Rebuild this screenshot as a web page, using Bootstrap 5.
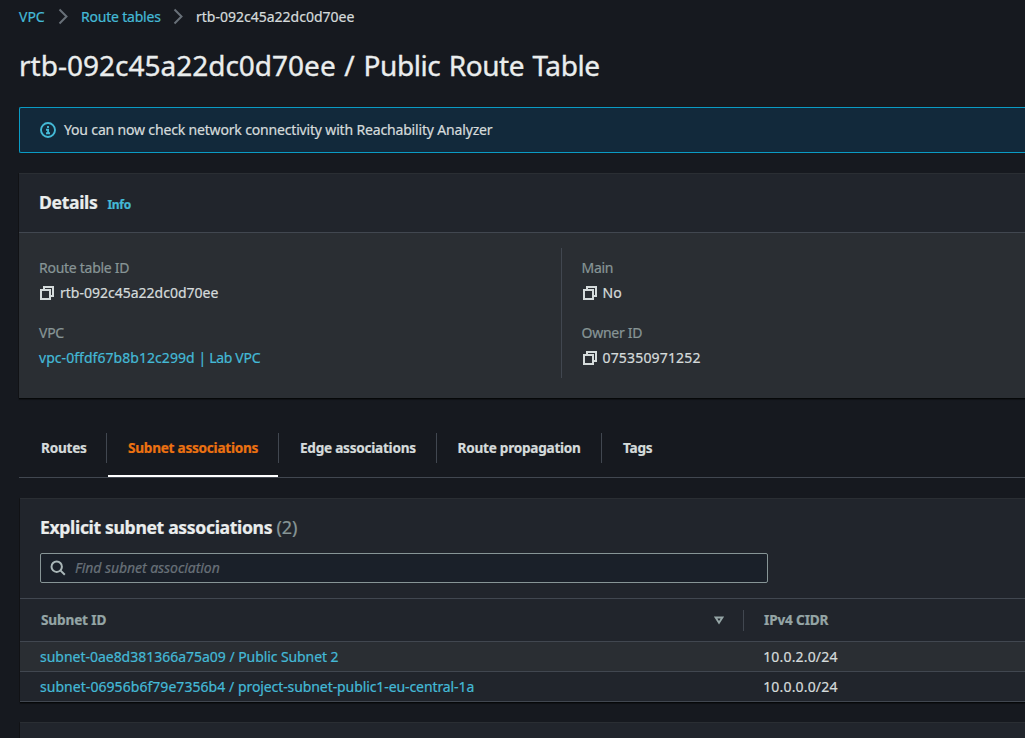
<!DOCTYPE html>
<html lang="en">
<head>
<meta charset="utf-8">
<meta name="viewport" content="width=device-width, initial-scale=1">
<title>Route table details</title>
<link href="https://cdn.jsdelivr.net/npm/bootstrap@5.3.0/dist/css/bootstrap.min.css" rel="stylesheet">
<style>
body{background:#16191f;color:#d5dbdb;font:14px/22px "Noto Sans",sans-serif;height:738px;overflow:hidden;white-space:nowrap;-webkit-text-stroke:.22px currentColor}
a{color:#44b9d6;text-decoration:none}
svg{flex:none;display:block}
.page{padding-left:19px}
.trail{height:34px;padding-bottom:1px}
.trail .step-vpc{width:62px}
.trail .step-tables{width:115px;letter-spacing:-.21px}
.chev{width:11px;height:17px;margin-left:auto;margin-right:12px;fill:none;stroke:#687078;stroke-width:2}
.page-title{font-size:28px;line-height:36px;font-weight:400;color:#eaeded;margin:13px 0 24px;word-spacing:1.4px;-webkit-text-stroke:.35px currentColor}
.page-title span{letter-spacing:-.41px}
.flash{height:46px;border:1px solid #0a9bc4;border-right:0;border-radius:2px 0 0 2px;background:#12293b;padding-left:20px;letter-spacing:-.165px}
.panel{background:#21252c;border-top:1px solid #2a2e33;box-shadow:0 1px 1px #0009,0 2px 1px #0003,-1px 0 0 #1116}
.panel h2{font-size:17.6px;line-height:22px;font-weight:700;color:#eaeded;margin:0;letter-spacing:-.35px}
.details{margin-top:20px}
.details-head{height:59px;border-bottom:1px solid #414750;padding:0 0 2px 20px}
.info{font-size:12px;font-weight:700;margin-left:10px;padding-top:6px;letter-spacing:-.3px}
.details-body{background:#2a2e33;height:165px;padding:15px 0 0 20px}
.details-body .first{width:522px}
.details-body .second{height:130px;border-left:1px solid #414750;padding-left:19.5px}
.field{height:65px;padding-top:9px}
.field .name{color:#879596;letter-spacing:-.27px}
.field .val{margin-top:3px;height:22px}
.copy{width:16px;height:16px;margin-right:5px;fill:none;stroke:#d5dbdb;stroke-width:2}
.num{letter-spacing:.17px}
.vpc{letter-spacing:.05px}
.vpc span{letter-spacing:-.3px}
.tabs{height:61px;margin-top:19px;border-bottom:1px solid #414750}
.tabs a{color:#d5dbdb;font-size:13.6px;font-weight:700;padding:20px 0 0 21px;letter-spacing:-.25px}
.tabs .sep{width:1px;height:30px;background:#414750;margin-top:16px}
.tab-a{width:87px}.tab-b{width:170px;margin-left:1px}.tab-c{width:157px}.tab-d{width:164px}
.tabs a.tab-a{padding-left:22px}
.tabs a.tab-b{color:#ec7211;border-bottom:2px solid #fff;padding-left:20px}
.tabs a.tab-d{padding-left:20.5px}
.list{margin:20px 0 0 1px}
.list-head{height:99px;padding:17px 0 0 20px}
.panel h2 .count{font-weight:400;color:#879596;letter-spacing:0;font-size:18px}
.search{width:728px;height:30px;border:1px solid #879596;border-radius:2px;background:#1a2029;margin-top:15px;padding-left:9px;color:#687078;font-style:italic;letter-spacing:-.05px}
.search svg{margin-right:9px}
.list-cols{border-top:1px solid #414750;height:43px;color:#95a5a6;font-size:13.6px;font-weight:700;padding-left:21px;letter-spacing:-.15px}
.list-row{border-top:1px solid #414750;height:30px;padding-left:20px}
.list-row.odd{background:#2a2e33}
.list-row.end{border-bottom:1px solid #414750;height:31px}
.list-row a{letter-spacing:.05px}
.list-row a span{letter-spacing:-.09px}
.list-row.odd a{letter-spacing:-.02px}
.list-row.end a{letter-spacing:.05px}
.cell-id{width:723.2px}
.head-id{width:702px;padding-right:19px}
.grip{width:1px;height:21px;background:#414750;margin-right:20px}
.next{height:16px}
</style>
</head>
<body>
<div class="page">
  <nav class="trail d-flex align-items-center" aria-label="breadcrumb">
    <div class="step-vpc d-flex align-items-center"><a href="#">VPC</a><svg class="chev" viewBox="0 0 11 17"><path d="M1.5 1.5 8.5 8.5 1.5 15.5"/></svg></div>
    <div class="step-tables d-flex align-items-center"><a href="#">Route tables</a><svg class="chev" viewBox="0 0 11 17"><path d="M1.5 1.5 8.5 8.5 1.5 15.5"/></svg></div>
    <div>rtb-092c45a22dc0d70ee</div>
  </nav>
  <h1 class="page-title">rtb-092c45a22dc0d70ee / <span>Public Route Table</span></h1>
  <div class="flash d-flex align-items-center">
    <svg width="16" height="16" viewBox="0 0 16 16" fill="none" stroke="#44b9d6" stroke-width="1.9"><circle cx="8" cy="8" r="7"/><path d="M8 4v2M6 7.7h2.1V11M6 11.2h4"/></svg>
    <span class="ms-2">You can now check network connectivity with Reachability Analyzer</span>
  </div>

  <section class="panel details">
    <div class="details-head d-flex align-items-center"><h2>Details</h2><a class="info" href="#">Info</a></div>
    <div class="details-body d-flex">
      <div class="first">
        <div class="field"><div class="name">Route table ID</div><div class="val d-flex align-items-center"><svg class="copy" viewBox="0 0 16 16"><path d="M2 5h9v9H2zM5 5V2h9v9h-3"/></svg>rtb-092c45a22dc0d70ee</div></div>
        <div class="field"><div class="name">VPC</div><div class="val"><a class="vpc" href="#">vpc-0ffdf67b8b12c299d <span>| Lab VPC</span></a></div></div>
      </div>
      <div class="second">
        <div class="field"><div class="name">Main</div><div class="val d-flex align-items-center"><svg class="copy" viewBox="0 0 16 16"><path d="M2 5h9v9H2zM5 5V2h9v9h-3"/></svg>No</div></div>
        <div class="field"><div class="name">Owner ID</div><div class="val num d-flex align-items-center"><svg class="copy" viewBox="0 0 16 16"><path d="M2 5h9v9H2zM5 5V2h9v9h-3"/></svg>075350971252</div></div>
      </div>
    </div>
  </section>

  <nav class="tabs d-flex">
    <a class="tab-a" href="#">Routes</a><div class="sep"></div>
    <a class="tab-b" href="#">Subnet associations</a><div class="sep"></div>
    <a class="tab-c" href="#">Edge associations</a><div class="sep"></div>
    <a class="tab-d" href="#">Route propagation</a><div class="sep"></div>
    <a href="#">Tags</a>
  </nav>

  <section class="panel list">
    <div class="list-head">
      <h2>Explicit subnet associations <span class="count">(2)</span></h2>
      <div class="search d-flex align-items-center"><svg width="16" height="16" viewBox="0 0 16 16" fill="none" stroke="#aab7b8" stroke-width="2"><circle cx="6.7" cy="6.7" r="5.2"/><path d="m10.4 10.4 4.4 4.4"/></svg>Find subnet association</div>
    </div>
    <div class="list-cols d-flex align-items-center">
      <div class="head-id d-flex align-items-center justify-content-between">Subnet ID<svg width="10" height="9" viewBox="0 0 10 9" fill="none" stroke="#95a5a6" stroke-width="1.9"><path d="M1.6 1.5h6.8L5 6.8z"/></svg></div>
      <div class="grip"></div>IPv4 CIDR
    </div>
    <div class="list-row odd d-flex align-items-center"><div class="cell-id"><a href="#">subnet-0ae8d381366a75a09 / <span>Public Subnet 2</span></a></div><span class="num">10.0.2.0/24</span></div>
    <div class="list-row end d-flex align-items-center"><div class="cell-id"><a href="#">subnet-06956b6f79e7356b4 / <span>project-subnet-public1-eu-central-1a</span></a></div><span class="num">10.0.0.0/24</span></div>
  </section>
  <section class="panel list next"></section>
</div>
<script src="https://cdn.jsdelivr.net/npm/bootstrap@5.3.0/dist/js/bootstrap.bundle.min.js"></script>
</body>
</html>
